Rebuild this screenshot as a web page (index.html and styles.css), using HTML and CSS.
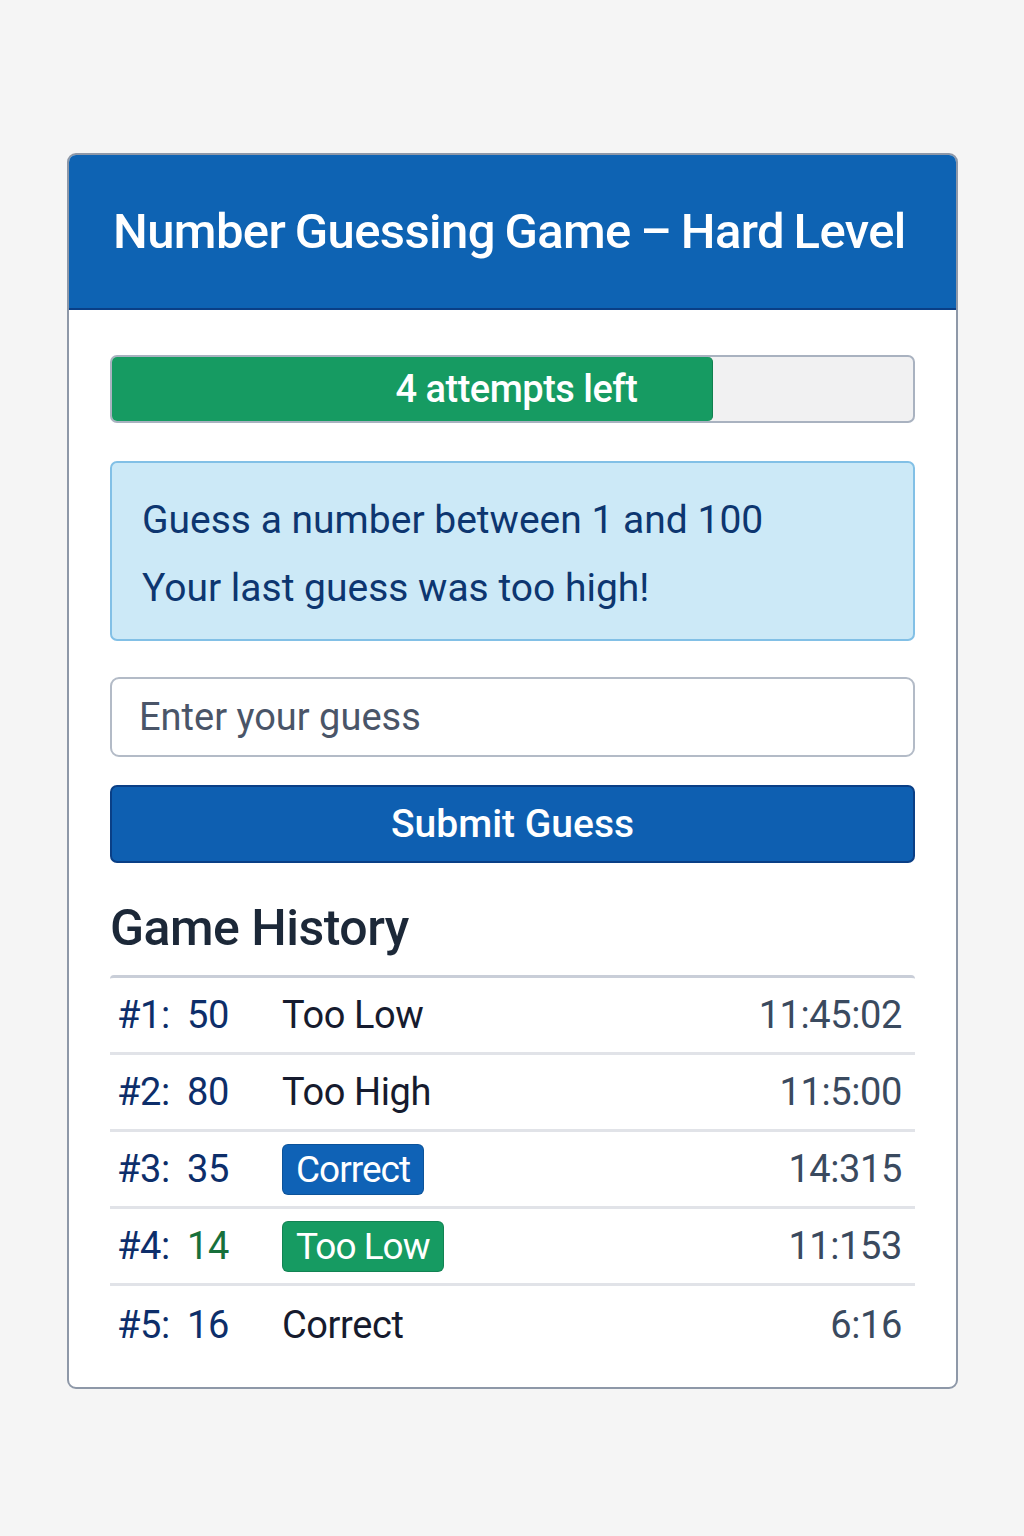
FILE: index.html
```html
<!DOCTYPE html>
<html lang="en">
<head>
<meta charset="utf-8">
<title>Number Guessing Game</title>
<link rel="stylesheet" href="styles.css">
</head>
<body>
<main class="page">
  <section class="card">
    <header class="card-header">
      <h1 class="title">Number Guessing Game – Hard Level</h1>
    </header>
    <div class="card-body">
      <div class="progress">
        <div class="progress-fill" style="width: 75%"></div>
        <span class="progress-label">4 attempts left</span>
      </div>
      <div class="alert">
        <p class="alert-line">Guess a number between 1 and 100</p>
        <p class="alert-line">Your last guess was too high!</p>
      </div>
      <input class="guess-input" type="text" placeholder="Enter your guess">
      <button class="submit-btn" type="button">Submit Guess</button>
      <h2 class="history-title">Game History</h2>
      <ul class="history">
        <li class="row"><span class="idx">#1:</span><span class="num">50</span><span class="status">Too Low</span><span class="time">11:45:02</span></li>
        <li class="row"><span class="idx">#2:</span><span class="num">80</span><span class="status">Too High</span><span class="time">11:5:00</span></li>
        <li class="row"><span class="idx">#3:</span><span class="num">35</span><span class="status"><span class="badge badge-blue">Correct</span></span><span class="time">14:315</span></li>
        <li class="row"><span class="idx">#4:</span><span class="num num-green">14</span><span class="status"><span class="badge badge-green">Too Low</span></span><span class="time">11:153</span></li>
        <li class="row"><span class="idx">#5:</span><span class="num">16</span><span class="status">Correct</span><span class="time">6:16</span></li>
      </ul>
    </div>
  </section>
</main>
</body>
</html>
```

FILE: styles.css
```css
* { box-sizing: border-box; }
html, body { margin: 0; padding: 0; }
body {
  background: #f5f5f5;
  font-family: Roboto, "Liberation Sans", sans-serif;
  width: 1024px;
  height: 1536px;
}
.page {
  padding: 153px 67px 0 67px;
}
.card {
  width: 891px;
  background: #ffffff;
  border: 2px solid #8e98a8;
  border-radius: 9px;
  overflow: hidden;
}
.card-header {
  background: #0e63b3;
  height: 155px;
  border-bottom: 2px solid #0a3f86;
  display: flex;
  align-items: center;
  padding: 0 0 0 44px;
}
.title {
  margin: 0;
  color: #ffffff;
  font-size: 49px;
  font-weight: 500;
  letter-spacing: -0.6px;
  word-spacing: -2px;
}
.card-body {
  padding: 45px 41px 24px 41px;
  display: flex;
  flex-direction: column;
}
.progress {
  position: relative;
  height: 68px;
  background: #f1f1f2;
  border: 2px solid #a9b2c0;
  border-radius: 7px;
  overflow: hidden;
  display: flex;
  align-items: center;
  justify-content: center;
}
.progress-fill {
  position: absolute;
  left: 0; top: 0; bottom: 0;
  background: #169b62;
  border-right: 1px solid #11804f;
  border-radius: 0 5px 5px 0;
}
.progress-label {
  position: relative;
  color: #ffffff;
  font-size: 38px;
  font-weight: 500;
  letter-spacing: -0.5px;
  padding-left: 8px;
}
.alert {
  margin-top: 38px;
  height: 180px;
  background: #cce9f7;
  border: 2px solid #82c0e6;
  border-radius: 7px;
  padding: 23px 30px 0 30px;
}
.alert-line {
  margin: 0;
  color: #0d3670;
  font-size: 39px;
  line-height: 68px;
}
.guess-input {
  margin-top: 36px;
  height: 80px;
  width: 100%;
  border: 2px solid #b3bbc7;
  border-radius: 9px;
  padding: 0 27px;
  font-family: Roboto, "Liberation Sans", sans-serif;
  font-size: 38px;
  color: #334155;
  background: #ffffff;
  outline: none;
}
.guess-input::placeholder { color: #4a5568; }
.submit-btn {
  margin-top: 28px;
  height: 78px;
  width: 100%;
  background: #0e5fb1;
  border: 2px solid #0a3f86;
  border-radius: 7px;
  color: #ffffff;
  font-family: Roboto, "Liberation Sans", sans-serif;
  font-size: 39px;
  font-weight: 500;
}
.history-title {
  margin: 36px 0 0 0;
  font-size: 50px;
  font-weight: 500;
  color: #1c2838;
  letter-spacing: -0.5px;
  line-height: 58px;
}
.history {
  list-style: none;
  margin: 18px 0 0 0;
  padding: 0;
  border-top: 3px solid #c9ced8;
  border-radius: 4px 4px 0 0;
}
.row {
  display: flex;
  align-items: center;
  height: 77px;
  padding: 0 13px 0 7px;
  font-size: 38px;
  border-bottom: 3px solid #e1e3e8;
  letter-spacing: -0.4px;
}
.row:last-child { border-bottom: none; }
.idx { color: #0d2e6a; width: 70px; }
.num { color: #0d2e6a; width: 95px; }
.num-green { color: #17703b; }
.status { color: #161b2e; flex: 1; }
.time { color: #3a4a5f; }
.badge {
  display: inline-block;
  color: #ffffff;
  border-radius: 6px;
  padding: 0 13px;
  line-height: 49px;
  font-size: 37px;
  letter-spacing: -1px;
  border: 1px solid rgba(0,0,0,0.15);
}
.badge-blue { background: #0f62b6; }
.badge-green { background: #169b62; }
```
